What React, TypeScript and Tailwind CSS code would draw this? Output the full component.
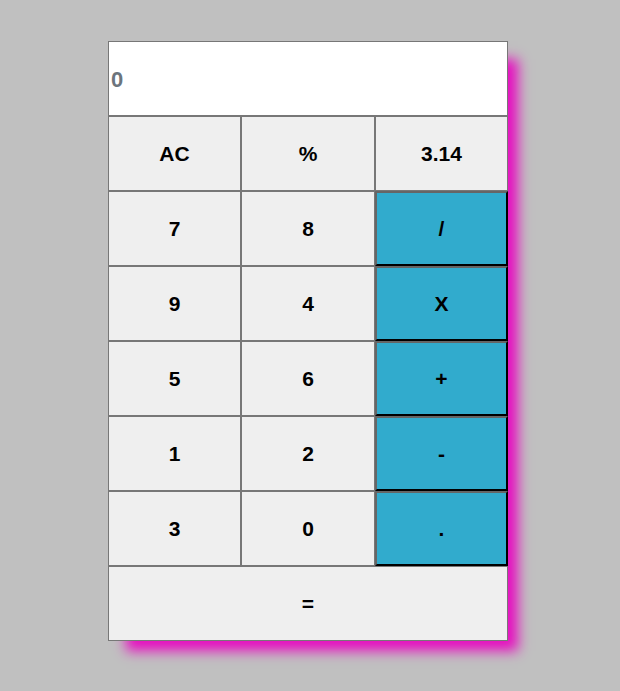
import React from "react"

const rows: { label: string; op?: boolean }[][] = [
  [{ label: "AC" }, { label: "%" }, { label: "3.14" }],
  [{ label: "7" }, { label: "8" }, { label: "/", op: true }],
  [{ label: "9" }, { label: "4" }, { label: "X", op: true }],
  [{ label: "5" }, { label: "6" }, { label: "+", op: true }],
  [{ label: "1" }, { label: "2" }, { label: "-", op: true }],
  [{ label: "3" }, { label: "0" }, { label: ".", op: true }],
]

export default function App() {
  return (
    <div className="min-h-screen bg-[#c0c0c0] pt-[41px] pl-[108px] font-['Liberation_Sans',Arial,sans-serif]">
      <div className="w-[400px] shadow-[14px_14px_12px_-4px_#e60fc0]">
        <div className="h-[75px] bg-white border border-[#777] flex items-center pl-[2px] pt-[2px] text-[22px] font-bold text-[#6c757d]">
          0
        </div>
        {rows.map((row, i) => (
          <div key={i} className="grid grid-cols-[133px_134px_133px] h-[75px]">
            {row.map((b) =>
              b.op ? (
                <button
                  key={b.label}
                  className="bg-[#31abcd] border-2 border-t-[#666] border-l-[#666] border-b-black border-r-black text-[21px] font-bold text-black"
                >
                  {b.label}
                </button>
              ) : (
                <button
                  key={b.label}
                  className="bg-[#efefef] border border-[#777] text-[21px] font-bold text-black"
                >
                  {b.label}
                </button>
              )
            )}
          </div>
        ))}
        <button className="w-full h-[75px] bg-[#efefef] border border-[#777] text-[21px] font-bold text-black">
          =
        </button>
      </div>
    </div>
  )
}
